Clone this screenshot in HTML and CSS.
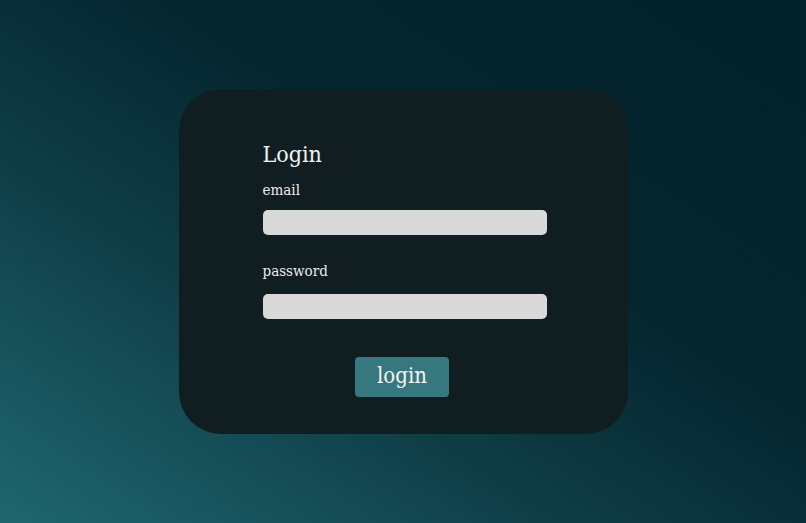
FILE: index.html
```html
<!DOCTYPE html>
<html lang="en">
<head>
<meta charset="utf-8">
<title>Login</title>
<link rel="stylesheet" href="styles.css">
</head>
<body>
<main class="page">
  <section class="card">
    <form class="form">
      <h1 class="title">Login</h1>
      <label class="label" for="email">email</label>
      <input class="input" id="email" type="email">
      <label class="label label-pass" for="password">password</label>
      <input class="input input-pass" id="password" type="password">
      <div class="actions">
        <button class="btn" type="button">login</button>
      </div>
    </form>
  </section>
</main>
</body>
</html>
```

FILE: styles.css
```css
html, body {
  margin: 0;
  height: 100%;
}
body {
  font-family: "DejaVu Serif Condensed", "DejaVu Serif", serif;
  background: linear-gradient(to top right, #1f6770 0%, #0f3d46 35%, #04262f 60%, #01212a 100%);
  color: #f2f2f2;
}
.page {
  height: 100%;
  display: flex;
  align-items: center;
  justify-content: center;
}
.card {
  width: 449px;
  height: 345px;
  box-sizing: border-box;
  background: #111e21;
  border-radius: 42px;
  padding: 50px 81px 0 84px;
}
.form {
  display: flex;
  flex-direction: column;
  width: 284px;
}
.title {
  margin: 0;
  font-size: 23px;
  font-weight: normal;
  line-height: 30px;
}
.label {
  font-size: 15px;
  line-height: 20px;
  margin-top: 11px;
  color: #ececec;
}
.label-pass {
  margin-top: 26px;
}
.input {
  margin: 10px 0 0;
  height: 25px;
  box-sizing: border-box;
  border: none;
  border-radius: 5px;
  background: #d9d9d9;
  padding: 0 8px;
}
.input-pass {
  margin-top: 13px;
}
.actions {
  display: flex;
  justify-content: center;
  margin-top: 38px;
  padding-right: 5px;
}
.btn {
  width: 94px;
  height: 40px;
  border: none;
  border-radius: 4px;
  background: #37777e;
  color: #f4f4f4;
  font-family: inherit;
  font-size: 22px;
  padding: 0 0 4px;
}
```
